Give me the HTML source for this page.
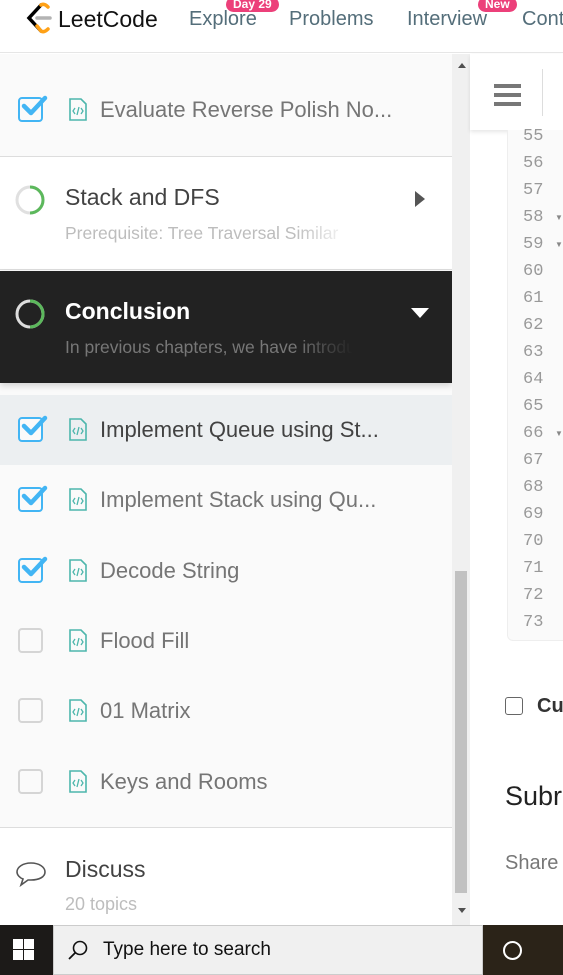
<!DOCTYPE html>
<html><head><meta charset="utf-8"><style>
*{margin:0;padding:0;box-sizing:border-box}
body{width:563px;height:975px;overflow:hidden;font-family:"Liberation Sans",sans-serif;background:#fff;position:relative}
.abs{position:absolute}
.hdr{left:0;top:0;width:563px;height:53px;background:#fff;border-bottom:1px solid #e6e6e6}
.nav{top:8px;font-size:20px;color:#546e7a}
.badge{background:#ec407a;color:#fff;font-size:12px;font-weight:bold;border-radius:8px;padding:0 7px;height:15px;line-height:15px;top:-3px}
.left{left:0;top:54px;width:452px;height:871px;background:#fafafa;overflow:hidden}
.cb{position:absolute;left:18px;width:25px;height:25px;border:2px solid #d5d5d5;border-radius:4px;background:#fafafa}
.cb.on{border-color:#42b5f4}
.ck{position:absolute;left:20px}
.t{position:absolute;left:100px;font-size:22px;color:#757575;white-space:nowrap}
.fi{position:absolute;left:68px}
.num{position:absolute;left:523px;font-family:"Liberation Mono",monospace;font-size:17px;color:#999}
.sub{position:absolute;left:65px;width:288px;overflow:hidden;white-space:nowrap;font-size:17.5px;-webkit-mask-image:linear-gradient(90deg,#000 80%,transparent);mask-image:linear-gradient(90deg,#000 80%,transparent)}
</style></head><body>
<div class="abs hdr">
 <svg class="abs" style="left:24px;top:2px" width="30" height="34" viewBox="0 0 30 34"><path d="M17 3 L5 16 L17 29" stroke="#000" stroke-width="3.5" fill="none" stroke-linecap="round"/><path d="M13 16 H26" stroke="#b3b3b3" stroke-width="3.5" stroke-linecap="round"/><path d="M13 24 L17 29 Q20 31 24 27" stroke="#ffa116" stroke-width="3.5" fill="none" stroke-linecap="round"/><path d="M17 3 Q20 1 24 5" stroke="#ffa116" stroke-width="3.5" fill="none" stroke-linecap="round"/></svg>
 <div class="abs" style="left:58px;top:6px;font-size:23px;color:#111">LeetCode</div>
 <div class="abs nav" style="left:189px">Explore</div>
 <div class="abs badge" style="left:226px">Day 29</div>
 <div class="abs nav" style="left:289px">Problems</div>
 <div class="abs nav" style="left:407px">Interview</div>
 <div class="abs badge" style="left:478px">New</div>
 <div class="abs nav" style="left:522px">Cont</div>
</div>

<div class="abs left">
 <div class="abs" style="left:0;top:102px;width:452px;height:114px;background:#fff;border-top:1px solid #ddd;border-bottom:1px solid #ddd"></div>
 <div class="abs" style="left:0;top:217px;width:452px;height:112px;background:#222;box-shadow:0 3px 6px rgba(0,0,0,.15)"></div>
 <div class="abs" style="left:0;top:341px;width:452px;height:70px;background:#eceff1"></div>
 <div class="abs" style="left:0;top:773px;width:452px;height:98px;background:#fff;border-top:1px solid #ddd"></div>
</div>

<div class="cb on abs" style="top:97px"></div><svg class="ck" style="top:94px" width="28" height="24"><path d="M4 12L11 19L25 4" stroke="#42b5f4" stroke-width="4.5" fill="none" stroke-linecap="round" stroke-linejoin="round"/></svg><svg class="fi" style="top:98px" width="20" height="24"><path d="M2 1H13L18 6V22H2Z" fill="none" stroke="#4db6ac" stroke-width="1.6"/><path d="M7 10L5 13L7 16M13 10L15 13L13 16M11 9L9 17" stroke="#4db6ac" stroke-width="1.3" fill="none"/></svg><div class="t" style="top:97px">Evaluate Reverse Polish No...</div>

<svg class="abs" style="left:14px;top:184px" width="32" height="32"><circle cx="16" cy="16" r="13" fill="none" stroke="#e0e0e0" stroke-width="3"/><path d="M16 3 A13 13 0 0 1 16 29" fill="none" stroke="#5cb85c" stroke-width="3"/></svg>
<div class="abs" style="left:65px;top:184px;font-size:23px;color:#424242">Stack and DFS</div>
<div class="sub" style="top:223px;color:#bdbdbd">Prerequisite: Tree Traversal Similar</div>
<div class="abs" style="left:415px;top:191px;width:0;height:0;border-top:8px solid transparent;border-bottom:8px solid transparent;border-left:10px solid #555"></div>

<svg class="abs" style="left:14px;top:298px" width="32" height="32"><circle cx="16" cy="16" r="13" fill="none" stroke="#ddd" stroke-width="3"/><path d="M16 3 A13 13 0 0 1 16 29" fill="none" stroke="#5cb85c" stroke-width="3"/></svg>
<div class="abs" style="left:65px;top:298px;font-size:23px;color:#fff;font-weight:bold">Conclusion</div>
<div class="sub" style="top:337px;color:#777">In previous chapters, we have introduced</div>
<div class="abs" style="left:411px;top:308px;width:0;height:0;border-left:9px solid transparent;border-right:9px solid transparent;border-top:10px solid #fff"></div>

<div class="cb on abs" style="top:417px"></div><svg class="ck" style="top:414px" width="28" height="24"><path d="M4 12L11 19L25 4" stroke="#42b5f4" stroke-width="4.5" fill="none" stroke-linecap="round" stroke-linejoin="round"/></svg><svg class="fi" style="top:418px" width="20" height="24"><path d="M2 1H13L18 6V22H2Z" fill="none" stroke="#4db6ac" stroke-width="1.6"/><path d="M7 10L5 13L7 16M13 10L15 13L13 16M11 9L9 17" stroke="#4db6ac" stroke-width="1.3" fill="none"/></svg><div class="t" style="top:417px;color:#424242">Implement Queue using St...</div>
<div class="cb on abs" style="top:487px"></div><svg class="ck" style="top:484px" width="28" height="24"><path d="M4 12L11 19L25 4" stroke="#42b5f4" stroke-width="4.5" fill="none" stroke-linecap="round" stroke-linejoin="round"/></svg><svg class="fi" style="top:488px" width="20" height="24"><path d="M2 1H13L18 6V22H2Z" fill="none" stroke="#4db6ac" stroke-width="1.6"/><path d="M7 10L5 13L7 16M13 10L15 13L13 16M11 9L9 17" stroke="#4db6ac" stroke-width="1.3" fill="none"/></svg><div class="t" style="top:487px">Implement Stack using Qu...</div>
<div class="cb on abs" style="top:558px"></div><svg class="ck" style="top:555px" width="28" height="24"><path d="M4 12L11 19L25 4" stroke="#42b5f4" stroke-width="4.5" fill="none" stroke-linecap="round" stroke-linejoin="round"/></svg><svg class="fi" style="top:559px" width="20" height="24"><path d="M2 1H13L18 6V22H2Z" fill="none" stroke="#4db6ac" stroke-width="1.6"/><path d="M7 10L5 13L7 16M13 10L15 13L13 16M11 9L9 17" stroke="#4db6ac" stroke-width="1.3" fill="none"/></svg><div class="t" style="top:558px">Decode String</div>
<div class="cb abs" style="top:628px"></div><svg class="fi" style="top:629px" width="20" height="24"><path d="M2 1H13L18 6V22H2Z" fill="none" stroke="#4db6ac" stroke-width="1.6"/><path d="M7 10L5 13L7 16M13 10L15 13L13 16M11 9L9 17" stroke="#4db6ac" stroke-width="1.3" fill="none"/></svg><div class="t" style="top:628px">Flood Fill</div>
<div class="cb abs" style="top:698px"></div><svg class="fi" style="top:699px" width="20" height="24"><path d="M2 1H13L18 6V22H2Z" fill="none" stroke="#4db6ac" stroke-width="1.6"/><path d="M7 10L5 13L7 16M13 10L15 13L13 16M11 9L9 17" stroke="#4db6ac" stroke-width="1.3" fill="none"/></svg><div class="t" style="top:698px">01 Matrix</div>
<div class="cb abs" style="top:769px"></div><svg class="fi" style="top:770px" width="20" height="24"><path d="M2 1H13L18 6V22H2Z" fill="none" stroke="#4db6ac" stroke-width="1.6"/><path d="M7 10L5 13L7 16M13 10L15 13L13 16M11 9L9 17" stroke="#4db6ac" stroke-width="1.3" fill="none"/></svg><div class="t" style="top:769px">Keys and Rooms</div>

<svg class="abs" style="left:15px;top:860px" width="32" height="28"><path d="M16 3C8 3 2 7 2 12C2 15 5 18 8 19L6 25L13 20C14 20 15 20 16 20C24 20 30 17 30 12C30 7 24 3 16 3Z" fill="none" stroke="#555" stroke-width="1.6"/></svg>
<div class="abs" style="left:65px;top:856px;font-size:23px;color:#424242">Discuss</div>
<div class="abs" style="left:65px;top:894px;font-size:18px;color:#bdbdbd">20 topics</div>

<div class="abs" style="left:452px;top:54px;width:18px;height:871px;background:#f0f0f0"></div>
<div class="abs" style="left:455px;top:571px;width:12px;height:322px;background:#c1c1c1"></div>
<div class="abs" style="left:458px;top:63px;border-left:4px solid transparent;border-right:4px solid transparent;border-bottom:5px solid #505050"></div>
<div class="abs" style="left:458px;top:908px;border-left:4px solid transparent;border-right:4px solid transparent;border-top:5px solid #505050"></div>

<div class="abs" style="left:470px;top:54px;width:93px;height:871px;background:#fff"></div>
<div class="abs" style="left:470px;top:54px;width:93px;height:76px;background:#fff;box-shadow:0 2px 4px rgba(0,0,0,.1)"></div>
<div class="abs" style="left:494px;top:84px;width:27px;height:4px;background:#777;box-shadow:0 9px 0 #777,0 18px 0 #777"></div>
<div class="abs" style="left:542px;top:69px;width:1px;height:47px;background:#ddd"></div>
<div class="abs" style="left:507px;top:130px;width:60px;height:511px;border:1px solid #eee;border-top:none;border-radius:0 0 0 6px;background:#fafafa"></div>
<div class="num" style="top:127px">55</div><div class="num" style="top:154px">56</div><div class="num" style="top:181px">57</div><div class="num" style="top:208px">58</div><div class="num" style="top:235px">59</div><div class="num" style="top:262px">60</div><div class="num" style="top:289px">61</div><div class="num" style="top:316px">62</div><div class="num" style="top:343px">63</div><div class="num" style="top:370px">64</div><div class="num" style="top:397px">65</div><div class="num" style="top:424px">66</div><div class="num" style="top:451px">67</div><div class="num" style="top:478px">68</div><div class="num" style="top:505px">69</div><div class="num" style="top:532px">70</div><div class="num" style="top:559px">71</div><div class="num" style="top:586px">72</div><div class="num" style="top:613px">73</div>
<div class="abs" style="left:555px;top:213px;font-size:8px;color:#888">▼</div>
<div class="abs" style="left:555px;top:240px;font-size:8px;color:#888">▼</div>
<div class="abs" style="left:555px;top:429px;font-size:8px;color:#888">▼</div>
<div class="abs" style="left:505px;top:697px;width:18px;height:18px;border:1.5px solid #666;border-radius:3px"></div>
<div class="abs" style="left:537px;top:695px;font-size:20px;font-weight:bold;color:#333">Cu</div>
<div class="abs" style="left:505px;top:781px;font-size:27px;color:#222">Subr</div>
<div class="abs" style="left:505px;top:852px;font-size:20px;color:#777">Share</div>

<div class="abs" style="left:0;top:925px;width:53px;height:50px;background:#1c1a18"></div>
<svg class="abs" style="left:13px;top:939px" width="21" height="21"><rect x="0" y="0" width="10" height="10" fill="#fff"/><rect x="11" y="0" width="10" height="10" fill="#fff"/><rect x="0" y="11" width="10" height="10" fill="#fff"/><rect x="11" y="11" width="10" height="10" fill="#fff"/></svg>
<div class="abs" style="left:53px;top:925px;width:430px;height:50px;background:#f0f0f0;border:1px solid #ccc"></div>
<svg class="abs" style="left:67px;top:939px" width="22" height="22"><circle cx="13" cy="9" r="6.5" fill="none" stroke="#111" stroke-width="1.6"/><path d="M8.5 13.5L2 20" stroke="#111" stroke-width="1.8"/></svg>
<div class="abs" style="left:103px;top:939px;font-size:19px;color:#111">Type here to search</div>
<div class="abs" style="left:483px;top:925px;width:80px;height:50px;background:#2b2318"></div>
<div class="abs" style="left:503px;top:941px;width:19px;height:19px;border:2.5px solid #fff;border-radius:50%"></div>
</body></html>
